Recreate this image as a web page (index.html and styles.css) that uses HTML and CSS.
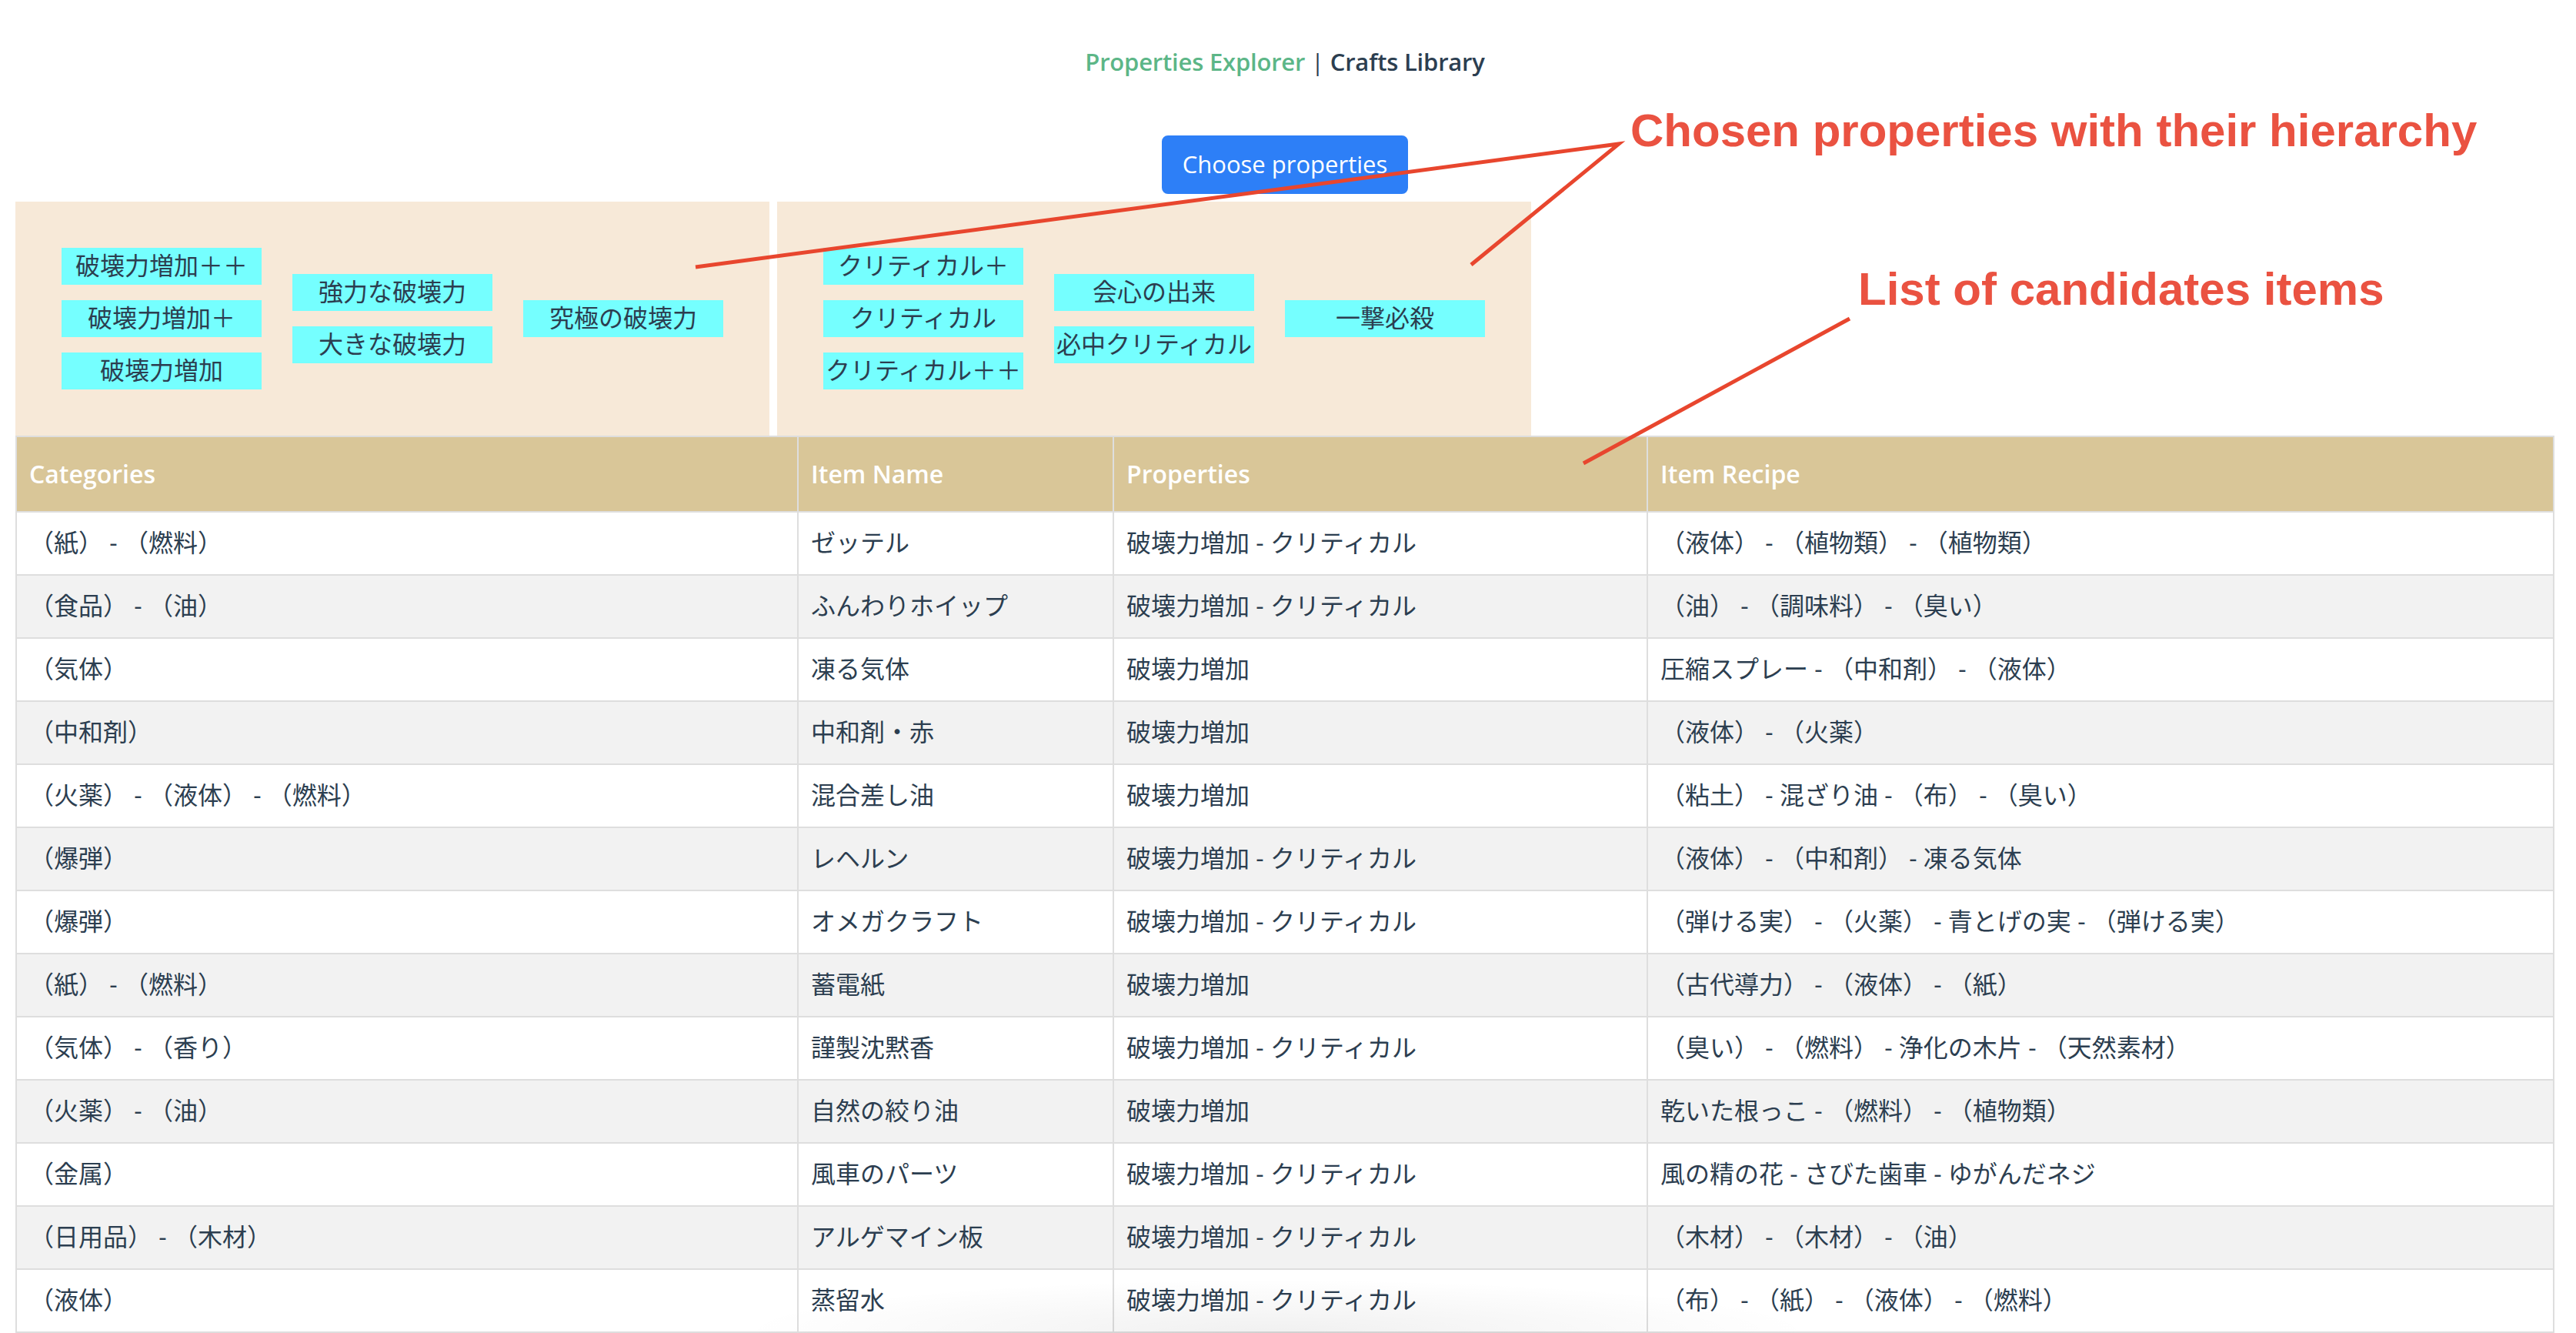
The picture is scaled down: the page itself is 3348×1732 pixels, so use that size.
FILE: index.html
```html
<!DOCTYPE html>
<html lang="ja">
<head>
<meta charset="utf-8">
<title>Properties Explorer</title>
<link rel="stylesheet" href="styles.css">
</head>
<body>
<div class="page">
  <nav class="nav">
    <a class="nav-link active" href="#">Properties Explorer</a> | <a class="nav-link" href="#">Crafts Library</a>
  </nav>

  <div class="actions">
    <button class="btn-primary" type="button">Choose properties</button>
  </div>

  <div class="hierarchy">
    <div class="panel">
      <div class="level">
        <div class="tag">破壊力増加＋＋</div>
        <div class="tag">破壊力増加＋</div>
        <div class="tag">破壊力増加</div>
      </div>
      <div class="level">
        <div class="tag">強力な破壊力</div>
        <div class="tag">大きな破壊力</div>
      </div>
      <div class="level">
        <div class="tag">究極の破壊力</div>
      </div>
    </div>
    <div class="panel">
      <div class="level">
        <div class="tag">クリティカル＋</div>
        <div class="tag">クリティカル</div>
        <div class="tag">クリティカル＋＋</div>
      </div>
      <div class="level">
        <div class="tag">会心の出来</div>
        <div class="tag">必中クリティカル</div>
      </div>
      <div class="level">
        <div class="tag">一撃必殺</div>
      </div>
    </div>
  </div>

  <table class="items">
    <thead>
      <tr>
        <th class="col-cat">Categories</th>
        <th class="col-name">Item Name</th>
        <th class="col-prop">Properties</th>
        <th class="col-recipe">Item Recipe</th>
      </tr>
    </thead>
    <tbody>
      <tr><td>（紙） - （燃料）</td><td>ゼッテル</td><td>破壊力増加 - クリティカル</td><td>（液体） - （植物類） - （植物類）</td></tr>
      <tr><td>（食品） - （油）</td><td>ふんわりホイップ</td><td>破壊力増加 - クリティカル</td><td>（油） - （調味料） - （臭い）</td></tr>
      <tr><td>（気体）</td><td>凍る気体</td><td>破壊力増加</td><td>圧縮スプレー - （中和剤） - （液体）</td></tr>
      <tr><td>（中和剤）</td><td>中和剤・赤</td><td>破壊力増加</td><td>（液体） - （火薬）</td></tr>
      <tr><td>（火薬） - （液体） - （燃料）</td><td>混合差し油</td><td>破壊力増加</td><td>（粘土） - 混ざり油 - （布） - （臭い）</td></tr>
      <tr><td>（爆弾）</td><td>レヘルン</td><td>破壊力増加 - クリティカル</td><td>（液体） - （中和剤） - 凍る気体</td></tr>
      <tr><td>（爆弾）</td><td>オメガクラフト</td><td>破壊力増加 - クリティカル</td><td>（弾ける実） - （火薬） - 青とげの実 - （弾ける実）</td></tr>
      <tr><td>（紙） - （燃料）</td><td>蓄電紙</td><td>破壊力増加</td><td>（古代導力） - （液体） - （紙）</td></tr>
      <tr><td>（気体） - （香り）</td><td>謹製沈黙香</td><td>破壊力増加 - クリティカル</td><td>（臭い） - （燃料） - 浄化の木片 - （天然素材）</td></tr>
      <tr><td>（火薬） - （油）</td><td>自然の絞り油</td><td>破壊力増加</td><td>乾いた根っこ - （燃料） - （植物類）</td></tr>
      <tr><td>（金属）</td><td>風車のパーツ</td><td>破壊力増加 - クリティカル</td><td>風の精の花 - さびた歯車 - ゆがんだネジ</td></tr>
      <tr><td>（日用品） - （木材）</td><td>アルゲマイン板</td><td>破壊力増加 - クリティカル</td><td>（木材） - （木材） - （油）</td></tr>
      <tr><td>（液体）</td><td>蒸留水</td><td>破壊力増加 - クリティカル</td><td>（布） - （紙） - （液体） - （燃料）</td></tr>
    </tbody>
  </table>
</div>

<svg class="annotation-lines" width="3348" height="1732" viewBox="0 0 3348 1732" aria-hidden="true">
  <polyline points="904,347 2104,187 1912,344" fill="none" stroke="#e8462e" stroke-width="5" stroke-linejoin="miter" stroke-miterlimit="10"/>
  <line x1="2404" y1="414" x2="2058" y2="602" stroke="#e8462e" stroke-width="5"/>
</svg>
<div class="note note-chosen">Chosen properties with their hierarchy</div>
<div class="note note-list">List of candidates items</div>
<div class="edge-shadow"></div>
</body>
</html>
```

FILE: styles.css
```css
html, body {
  margin: 0;
  padding: 0;
  background: #ffffff;
}

body {
  font-family: "Open Sans", "Noto Sans CJK JP", sans-serif;
  color: #2c3e50;
  position: relative;
  overflow: hidden;
  height: 1732px;
}

.page {
  width: 3340px;
  padding: 0 20px;
  box-sizing: border-box;
}

/* top navigation */
.nav {
  padding-top: 56px;
  text-align: center;
  font-size: 31px;
  line-height: 48px;
  letter-spacing: -0.2px;
  color: #2c3e50;
}

.nav-link {
  font-weight: 600;
  color: #2c3e50;
  text-decoration: none;
}

.nav-link.active {
  color: #5cb687;
}

/* button */
.actions {
  display: flex;
  justify-content: center;
  margin-top: 72px;
}

.btn-primary {
  font-family: "Open Sans", sans-serif;
  font-size: 31px;
  font-weight: 400;
  line-height: 48px;
  padding: 11px 25px 13px;
  border: 2px solid #2d7ff7;
  background: #2d7ff7;
  color: #ffffff;
  border-radius: 8px;
}

/* hierarchy panels */
.hierarchy {
  display: flex;
  gap: 10px;
  margin-top: 10px;
}

.panel {
  width: 980px;
  height: 304px;
  box-sizing: border-box;
  padding: 0 60px;
  background: #f7e9d8;
  display: flex;
  align-items: center;
  gap: 40px;
}

.level {
  display: flex;
  flex-direction: column;
  gap: 20px;
}

.tag {
  width: 260px;
  height: 48px;
  line-height: 46px;
  text-align: center;
  background: #75ffff;
  font-size: 32px;
  color: #2c3e50;
  white-space: nowrap;
}

/* table */
.items {
  width: 3300px;
  table-layout: fixed;
  border-collapse: separate;
  border-spacing: 0;
  font-size: 32px;
}

.items th,
.items td {
  box-sizing: border-box;
  border-left: 2px solid #dedede;
  border-bottom: 2px solid #dedede;
  text-align: left;
  line-height: 48px;
  white-space: nowrap;
  overflow: hidden;
}

.items th:last-child,
.items td:last-child {
  border-right: 2px solid #dedede;
}

.items th {
  border-top: 2px solid #dedede;
  background: #d9c698;
  color: #ffffff;
  font-weight: 600;
  padding: 24px 16px;
}

.items td {
  padding: 15px 16px 17px;
  color: #2c3e50;
  background: #ffffff;
}

.items tbody tr:nth-child(even) td {
  background: #f2f2f2;
}

.col-cat { width: 1016px; }
.col-name { width: 410px; }
.col-prop { width: 694px; }
.col-recipe { width: 1180px; }

/* annotations overlay */
.annotation-lines {
  position: absolute;
  left: 0;
  top: 0;
  pointer-events: none;
}

.note {
  position: absolute;
  font-family: "Liberation Sans", Arial, sans-serif;
  font-weight: 700;
  font-size: 60px;
  line-height: 60px;
  color: #ea5241;
  white-space: nowrap;
}

.note-chosen {
  left: 2119px;
  top: 140px;
}

.note-list {
  left: 2415px;
  top: 346px;
}

.edge-shadow {
  position: absolute;
  left: 960px;
  top: 1662px;
  width: 1400px;
  height: 70px;
  background: radial-gradient(ellipse 50% 100% at 50% 100%, rgba(0, 0, 0, 0.06), rgba(0, 0, 0, 0));
  pointer-events: none;
}
```
